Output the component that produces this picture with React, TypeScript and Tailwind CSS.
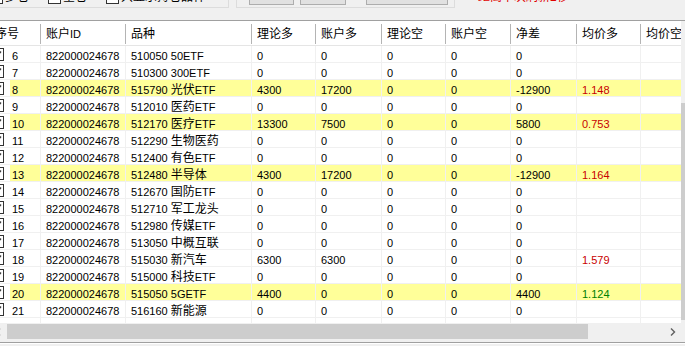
import React from 'react';

type Row = {
  no: number;
  code: string;
  name: string;
  ll: string;
  zl: string;
  lk: string;
  zk: string;
  net: string;
  avg: string;
  avgColor?: 'red' | 'green';
  hl?: boolean;
};

const ACCOUNT = '822000024678';

const rows: Row[] = [
  { no: 6, code: '510050', name: '50ETF', ll: '0', zl: '0', lk: '0', zk: '0', net: '0', avg: '' },
  { no: 7, code: '510300', name: '300ETF', ll: '0', zl: '0', lk: '0', zk: '0', net: '0', avg: '' },
  { no: 8, code: '515790', name: '光伏ETF', ll: '4300', zl: '17200', lk: '0', zk: '0', net: '-12900', avg: '1.148', avgColor: 'red', hl: true },
  { no: 9, code: '512010', name: '医药ETF', ll: '0', zl: '0', lk: '0', zk: '0', net: '0', avg: '' },
  { no: 10, code: '512170', name: '医疗ETF', ll: '13300', zl: '7500', lk: '0', zk: '0', net: '5800', avg: '0.753', avgColor: 'red', hl: true },
  { no: 11, code: '512290', name: '生物医药', ll: '0', zl: '0', lk: '0', zk: '0', net: '0', avg: '' },
  { no: 12, code: '512400', name: '有色ETF', ll: '0', zl: '0', lk: '0', zk: '0', net: '0', avg: '' },
  { no: 13, code: '512480', name: '半导体', ll: '4300', zl: '17200', lk: '0', zk: '0', net: '-12900', avg: '1.164', avgColor: 'red', hl: true },
  { no: 14, code: '512670', name: '国防ETF', ll: '0', zl: '0', lk: '0', zk: '0', net: '0', avg: '' },
  { no: 15, code: '512710', name: '军工龙头', ll: '0', zl: '0', lk: '0', zk: '0', net: '0', avg: '' },
  { no: 16, code: '512980', name: '传媒ETF', ll: '0', zl: '0', lk: '0', zk: '0', net: '0', avg: '' },
  { no: 17, code: '513050', name: '中概互联', ll: '0', zl: '0', lk: '0', zk: '0', net: '0', avg: '' },
  { no: 18, code: '515030', name: '新汽车', ll: '6300', zl: '6300', lk: '0', zk: '0', net: '0', avg: '1.579', avgColor: 'red' },
  { no: 19, code: '515000', name: '科技ETF', ll: '0', zl: '0', lk: '0', zk: '0', net: '0', avg: '' },
  { no: 20, code: '515050', name: '5GETF', ll: '4400', zl: '0', lk: '0', zk: '0', net: '4400', avg: '1.124', avgColor: 'green', hl: true },
  { no: 21, code: '516160', name: '新能源', ll: '0', zl: '0', lk: '0', zk: '0', net: '0', avg: '' },
];

// CJK glyphs read a touch larger than the digits in the original list
const txt = (s: string) =>
  s.split(/([\u4e00-\u9fff]+)/).map((p, i) =>
    /[\u4e00-\u9fff]/.test(p) ? (
      <span key={i} className="text-[12px]">
        {p}
      </span>
    ) : (
      p
    )
  );

const Check = () => (
  <svg width="13" height="13" viewBox="0 0 13 13" className="shrink-0 -ml-[9px]">
    <rect x="0.5" y="0.5" width="12" height="12" fill="#fff" stroke="#333" />
    <path d="M3 6.5 L5.5 9 L10 3.5" fill="none" stroke="#333" strokeWidth="1.3" />
  </svg>
);

const Box = () => (
  <span className="inline-block w-[13px] h-[13px] border border-[#333] bg-white shrink-0" />
);

const Chevron = ({ left }: { left?: boolean }) => (
  <svg width="6" height="8" viewBox="0 0 6 8" className="shrink-0">
    <path d={left ? 'M5 0.5 L1.5 4 L5 7.5' : 'M1 0.5 L4.5 4 L1 7.5'} fill="none" stroke="#606060" strokeWidth="1.4" />
  </svg>
);

const widths = ['w-[85px]', 'w-[126px]', 'w-[64px]', 'w-[66px]', 'w-[64px]', 'w-[65px]', 'w-[66px]', 'w-[64px]', 'w-[64px]'];
const heads = ['账户ID', '品种', '理论多', '账户多', '理论空', '账户空', '净差', '均价多', '均价空'];

const App: React.FC = () => {
  return (
    <div
      className="w-[685px] h-[346px] overflow-hidden bg-[#f0f0f0] text-[11px] text-black"
      style={{ fontFamily: '"Liberation Sans", "Noto Sans CJK SC", sans-serif' }}
    >
      {/* cut-off toolbar */}
      <div className="h-[20px] overflow-hidden flex items-start">
        <div className="-ml-[8px] -mt-[21px] h-[29px] w-[237px] shrink-0 border border-[#dcdcdc] flex items-end pb-[3px] text-[12px] leading-[14px]">
          <div className="flex items-end ml-[-3px]">
            <Box />
            <span className="ml-[2px]">多仓</span>
          </div>
          <div className="flex items-end ml-[19px]">
            <Box />
            <span className="ml-[2px]">空仓</span>
          </div>
          <div className="flex items-end ml-[19px]">
            <Box />
            <span className="ml-[2px]">只显示持仓品种</span>
          </div>
        </div>
        <div className="ml-[7px] -mt-[21px] h-[29px] w-[219px] shrink-0 border border-[#dcdcdc] flex items-end pb-[2px] pl-[12px] text-[12px]">
          <div className="w-[45px] h-[22px] border border-[#adadad] bg-[#e1e1e1] flex items-center justify-center">全选</div>
          <div className="ml-[6px] w-[46px] h-[22px] border border-[#adadad] bg-[#e1e1e1] flex items-center justify-center">全不选</div>
          <div className="ml-[20px] w-[82px] h-[22px] border border-[#adadad] bg-[#e1e1e1] flex items-center justify-center">一键调仓</div>
        </div>
        <div className="ml-[23px] -mt-[10px] text-[12px] leading-[14px] text-[#e00000] whitespace-nowrap">距离下次刷新2秒</div>
      </div>
      <div className="h-px bg-[#a0a0a0]" />

      {/* list */}
      <div className="flex h-[302px] overflow-hidden">
        <div className="w-[681px] shrink-0 overflow-hidden bg-white">
          {/* header */}
          <div className="flex h-[25px] border-b border-[#e5e5e5] leading-[24px] whitespace-nowrap">
            <div className="w-[41px] shrink-0 flex">
              <span className="flex-1 -ml-[5px] pt-[1px] text-[12px]">序号</span>
              <span className="w-px h-[20px] mt-[3px] bg-[#b4b4b4]" />
            </div>
            {heads.map((h, i) => (
              <div key={h} className={`${widths[i]} shrink-0 flex`}>
                <span className="flex-1 pl-[5px] pt-[1px] overflow-hidden">{txt(h)}</span>
                <span className="w-px h-[20px] mt-[3px] bg-[#b4b4b4]" />
              </div>
            ))}
          </div>

          {rows.map((r) => {
            const cells = [ACCOUNT, `${r.code} ${r.name}`, r.ll, r.zl, r.lk, r.zk, r.net, r.avg, ''];
            return (
              <div
                key={r.no}
                className={`flex h-[17px] border-b border-[#f0f0f0] whitespace-nowrap leading-[16px] ${r.hl ? 'bg-[#ffff99]' : ''}`}
              >
                <div className="w-[41px] shrink-0 flex border-r border-[#f0f0f0]">
                  <div className="w-[10px] shrink-0 flex items-center bg-white">
                    <Check />
                  </div>
                  <span className="flex-1 pl-[2px] pt-[2px]">{r.no}</span>
                </div>
                {cells.map((c, i) => (
                  <div
                    key={i}
                    className={`${widths[i]} shrink-0 border-r border-[#f0f0f0] pl-[5px] pt-[2px] overflow-hidden ${
                      i === 7 && r.avgColor === 'red' ? 'text-[#c80000]' : ''
                    } ${i === 7 && r.avgColor === 'green' ? 'text-[#008000]' : ''}`}
                  >
                    {txt(c)}
                  </div>
                ))}
              </div>
            );
          })}
          {/* empty space below last row */}
          <div className="flex h-[5px]">
            <div className="w-[41px] shrink-0 border-r border-[#f0f0f0]" />
            {widths.map((w, i) => (
              <div key={i} className={`${w} shrink-0 border-r border-[#f0f0f0]`} />
            ))}
          </div>
        </div>
        {/* vertical scrollbar, mostly off screen */}
        <div className="w-[17px] shrink-0 bg-[#f0f0f0] flex flex-col">
          <div className="h-[82px]" />
          <div className="h-[217px] w-[15px] bg-[#cdcdcd]" />
        </div>
      </div>

      {/* horizontal scrollbar */}
      <div className="flex h-[17px] items-center bg-[#f0f0f0]">
        <div className="w-[7px] shrink-0 flex items-center">
          <span className="-ml-[5px] flex">
            <Chevron left />
          </span>
        </div>
        <div className="w-[581px] h-[15px] bg-[#cdcdcd]" />
        <div className="ml-auto w-[17px] h-[17px] flex items-center justify-center">
          <Chevron />
        </div>
        <div className="w-[4px]" />
      </div>
      <div className="h-[2px]" />
      <div className="h-px bg-[#a0a0a0]" />
      <div className="h-px bg-white" />
    </div>
  );
};

export default App;
